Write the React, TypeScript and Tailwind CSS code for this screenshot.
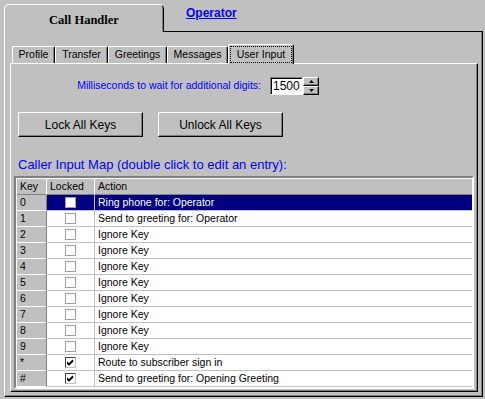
import React from 'react'

const rows = [
  { key: '0', locked: false, action: 'Ring phone for: Operator' },
  { key: '1', locked: false, action: 'Send to greeting for: Operator' },
  { key: '2', locked: false, action: 'Ignore Key' },
  { key: '3', locked: false, action: 'Ignore Key' },
  { key: '4', locked: false, action: 'Ignore Key' },
  { key: '5', locked: false, action: 'Ignore Key' },
  { key: '6', locked: false, action: 'Ignore Key' },
  { key: '7', locked: false, action: 'Ignore Key' },
  { key: '8', locked: false, action: 'Ignore Key' },
  { key: '9', locked: false, action: 'Ignore Key' },
  { key: '*', locked: true, action: 'Route to subscriber sign in' },
  { key: '#', locked: true, action: 'Send to greeting for: Opening Greeting' },
]

const tabs = [
  { label: 'Profile', w: 'w-[43px]' },
  { label: 'Transfer', w: 'w-[53px]' },
  { label: 'Greetings', w: 'w-[59px]' },
  { label: 'Messages', w: 'w-[61px]' },
]

function CheckBox({ checked }: { checked: boolean }) {
  return (
    <span
      className={`flex h-[11px] w-[11px] items-center justify-center bg-white border ${
        checked ? 'border-t-[#404040] border-l-[#404040] border-r-[#c0c0c0] border-b-[#c0c0c0]' : 'border-[#a0a0a0]'
      }`}
    >
      {checked && (
        <svg width="7" height="7" viewBox="0 0 7 7">
          <path d="M0 3 L2 5 L6 1 M0 4 L2 6 L6 2" stroke="#000" strokeWidth="1.2" fill="none" />
        </svg>
      )}
    </span>
  )
}

function Win95Button({ children }: { children: React.ReactNode }) {
  return (
    <button className="flex h-[25px] w-[125px] items-center justify-center border border-t-white border-l-white border-r-black border-b-black bg-[#c0c0c0] text-[12px] text-black shadow-[inset_-1px_-1px_0_0_#808080]">
      {children}
    </button>
  )
}

export default function App() {
  return (
    <div className="relative h-[399px] w-[485px] overflow-hidden bg-[#c0c0c0] pl-[4px] pt-[4px] font-['Liberation_Sans',Arial,sans-serif] text-black">
      {/* top level tabs */}
      <div className="flex h-[28px] w-[479px]">
        <div className="flex w-[160px] items-center justify-center rounded-t-[5px] border-l border-t border-r border-l-white border-t-white border-r-black pt-[3px] shadow-[inset_-1px_0_0_0_#808080]">
          <span className="font-['Liberation_Serif',serif] text-[12.5px] font-bold">Call Handler</span>
        </div>
        <div className="flex-1 border-b border-black pl-[22px] pt-px leading-[14px]">
          <span className="text-[12px] font-bold leading-[14px] text-[#0000ff] underline">Operator</span>
        </div>
      </div>

      {/* outer page */}
      <div className="h-[365px] w-[479px] border-l border-r border-b border-l-white border-r-black border-b-black pl-[5px] pt-[12px] shadow-[inset_-1px_-1px_0_0_#808080]">
        {/* inner tab strip */}
        <div className="relative z-10 flex h-[19px] items-end pl-[2px] text-[10.5px]">
          {tabs.map((t) => (
            <div
              key={t.label}
              className={`${t.w} flex h-[17px] items-center justify-center rounded-t-[2px] border-l border-t border-r border-l-white border-t-white border-r-black shadow-[inset_-1px_0_0_0_#808080]`}
            >
              {t.label}
            </div>
          ))}
          <div className="-mb-px flex h-[20px] w-[66px] rounded-t-[2px] border-l border-t border-r border-l-white border-t-white border-r-black bg-[#c0c0c0] p-px shadow-[inset_-1px_0_0_0_#808080]">
            <div className="flex flex-1 items-center justify-center border border-dotted border-black">User Input</div>
          </div>
        </div>

        {/* inner page */}
        <div className="h-[329px] w-[468px] border border-t-white border-l-white border-r-black border-b-black pt-[13px] shadow-[inset_-1px_-1px_0_0_#808080]">
          <div className="flex h-[18px] w-[308px] items-center justify-end">
            <span className="mr-[9px] text-[10.5px] text-[#0000ff]">Milliseconds to wait for additional digits:</span>
            <div className="flex h-[18px] w-[33px] items-center border border-t-[#808080] border-l-[#808080] border-r-white border-b-white pl-[1px] text-[12px] shadow-[inset_1px_1px_0_0_#000]">
              <span className="bg-white pl-[1px] pr-[4px] leading-[15px]">1500</span>
            </div>
            <div className="flex w-[16px] flex-col">
              <div className="flex h-[9px] items-center justify-center border border-t-white border-l-white border-r-black border-b-black shadow-[inset_-1px_-1px_0_0_#808080]">
                <svg width="5" height="3" viewBox="0 0 5 3">
                  <path d="M2.5 0 L5 3 L0 3 Z" fill="#000" />
                </svg>
              </div>
              <div className="flex h-[9px] items-center justify-center border border-t-white border-l-white border-r-black border-b-black shadow-[inset_-1px_-1px_0_0_#808080]">
                <svg width="5" height="3" viewBox="0 0 5 3">
                  <path d="M0 0 L5 0 L2.5 3 Z" fill="#000" />
                </svg>
              </div>
            </div>
          </div>

          <div className="ml-[7px] mt-[17px] flex gap-[15px]">
            <Win95Button>Lock All Keys</Win95Button>
            <Win95Button>Unlock All Keys</Win95Button>
          </div>

          <div className="ml-[7px] mt-[20px] text-[13px] leading-[16px] text-[#0000ff]">
            Caller Input Map (double click to edit an entry):
          </div>

          <div className="ml-[3px] mt-[3px] w-[460px] border-2 border-t-[#808080] border-l-[#808080] border-r-white border-b-white text-[10.5px] shadow-[inset_1px_1px_0_0_#000,inset_-1px_-1px_0_0_#c0c0c0]">
            <div className="grid grid-cols-[30px_48px_1fr] bg-white pl-px pt-px">
              <div className="flex h-[16px] items-center border-b border-r border-b-[#808080] border-r-white bg-[#c0c0c0] pl-[3px]">Key</div>
              <div className="flex h-[16px] items-center border-b border-r border-b-[#808080] border-r-white bg-[#c0c0c0] pl-[3px]">Locked</div>
              <div className="flex h-[16px] items-center border-b border-b-[#808080] bg-[#c0c0c0] pl-[3px]">Action</div>
              {rows.map((r, i) => {
                const sel = i === 0
                return (
                  <React.Fragment key={r.key}>
                    <div className="flex h-[16px] items-center border-b border-r border-b-white border-r-[#808080] bg-[#c0c0c0] pl-[3px]">
                      {r.key}
                    </div>
                    <div
                      className={`flex h-[16px] items-center justify-center border-b border-r border-b-[#c0c0c0] border-r-[#c0c0c0] ${
                        sel ? 'bg-[#000080]' : 'bg-white'
                      }`}
                    >
                      <CheckBox checked={r.locked} />
                    </div>
                    <div
                      className={`flex h-[16px] items-center border-b border-b-[#c0c0c0] pl-[3px] ${
                        sel ? 'bg-[#000080] text-white' : 'bg-white'
                      }`}
                    >
                      {r.action}
                    </div>
                  </React.Fragment>
                )
              })}
            </div>
          </div>
        </div>
      </div>
    </div>
  )
}
